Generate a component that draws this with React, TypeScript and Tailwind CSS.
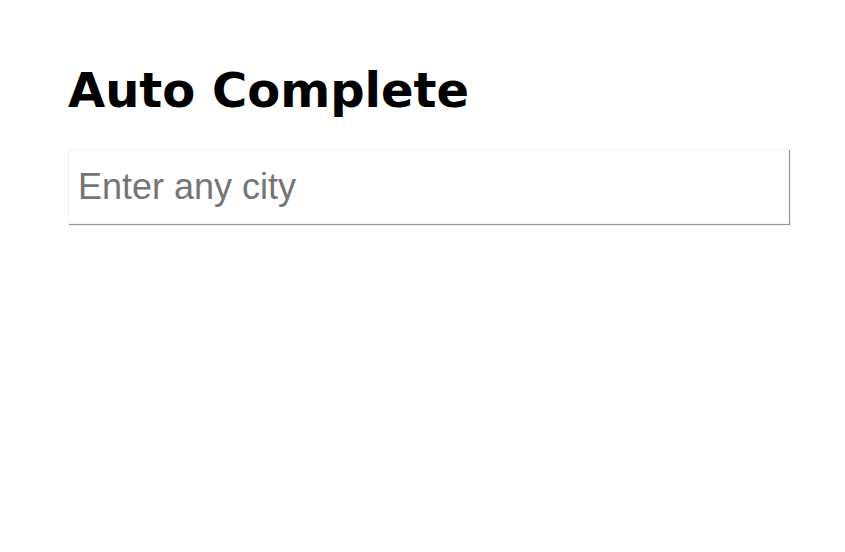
import React from "react";

export default function App() {
  return (
    <div className="flex min-h-[552px] flex-col items-start bg-white pl-[68px] pt-[62px]">
      <h1 className="m-0 font-['DejaVu_Sans',sans-serif] text-[48px] font-bold leading-[56px] text-black">
        Auto Complete
      </h1>
      <input
        autoFocus
        type="text"
        placeholder="Enter any city"
        className="mt-[31px] block h-[75px] w-[721px] border border-[#f2f2f2] bg-white px-[9px] font-['Liberation_Sans',Arial,sans-serif] text-[36px] text-black caret-black shadow-[1px_1px_1px_#9a9a9a] outline-none placeholder:text-[#757575]"
      />
    </div>
  );
}
